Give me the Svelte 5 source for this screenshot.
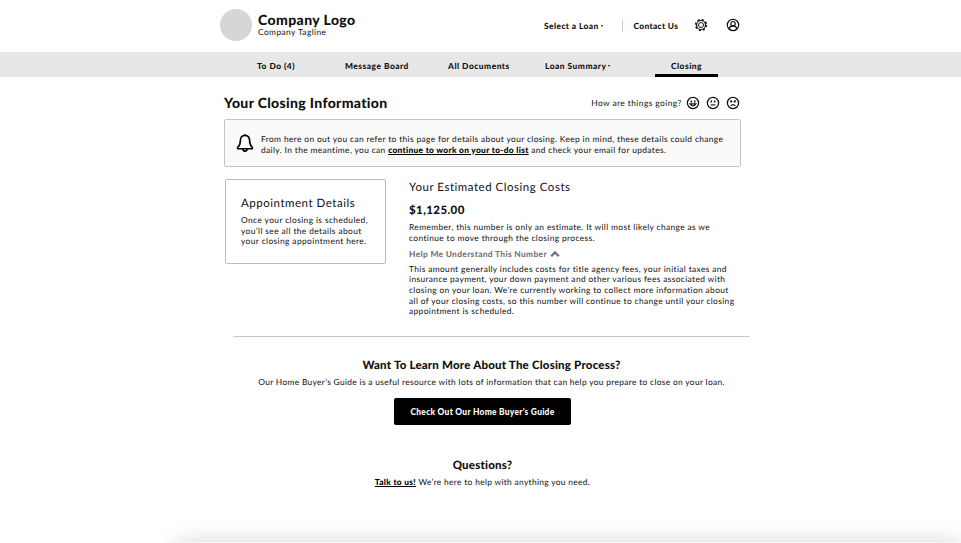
<script>
  const tabs = ['To Do (4)', 'Message Board', 'All Documents', 'Loan Summary', 'Closing'];
  const moods = [
    { name: 'Happy', mouth: 'M4.1 7.9Q7 12 9.9 7.9Z' },
    { name: 'Neutral', mouth: 'M4.7 8.9H9.3' },
    { name: 'Unhappy', mouth: 'M4.6 10Q7 7.2 9.4 10' }
  ];
  const costs = [
    'This amount generally includes costs for title agency fees, your initial taxes and',
    'insurance payment, your down payment and other various fees associated with',
    'closing on your loan. We’re currently working to collect more information about',
    'all of your closing costs, so this number will continue to change until your closing',
    'appointment is scheduled.'
  ];
</script>

<div class="page">
  <header>
    <div class="logo"></div>
    <div class="brand">
      <div class="name">Company Logo</div>
      <div class="tagline">Company Tagline</div>
    </div>
    <div class="select bold">Select a Loan<i class="caret"></i></div>
    <div class="rule"></div>
    <div class="contact bold">Contact Us</div>
    <svg class="gear" width="14" height="14" viewBox="0 0 14 14" fill="none" stroke="#111">
      <circle cx="7" cy="7" r="5.4" stroke-width="1.5" stroke-dasharray="2.12 2.12" />
      <circle cx="7" cy="7" r="4.5" stroke-width="1.2" />
      <circle cx="7" cy="7" r="2.5" stroke-width="1" />
    </svg>
    <svg class="user" width="14" height="14" viewBox="0 0 14 14" fill="none" stroke="#111" stroke-width="1.2">
      <circle cx="7" cy="7" r="5.7" />
      <circle cx="7" cy="5.7" r="2.2" />
      <path d="M3.2 11Q3.6 8.4 5.7 8.2H8.3Q10.4 8.4 10.8 11" />
    </svg>
  </header>

  <nav>
    {#each tabs as tab}
      <div class="tab bold" class:active={tab === 'Closing'}>
        {tab}{#if tab === 'Loan Summary'}<i class="caret"></i>{/if}
      </div>
    {/each}
  </nav>

  <main>
    <div class="titlebar">
      <h1>Your Closing Information</h1>
      <div class="feedback">
        <span class="ask">How are things going?</span>
        {#each moods as mood}
          <svg width="14" height="14" viewBox="0 0 14 14" fill="none" stroke="#111" stroke-width="1.1" aria-label={mood.name}>
            <circle cx="7" cy="7" r="5.6" stroke-width="1.3" />
            <path d="M5.3 4.4V6.4M8.7 4.4V6.4" stroke-width="1.5" />
            {#if mood.name === 'Unhappy'}<path d="M4.1 4.7L6.2 5.8M9.9 4.7L7.8 5.8" />{/if}
            <path d={mood.mouth} />
          </svg>
        {/each}
      </div>
    </div>

    <section class="notice">
      <svg width="18" height="20" viewBox="0 0 18 20" fill="none" stroke="#000" stroke-width="1.6" stroke-linejoin="round">
        <path d="M9 1V2.5M9 2.5C6 2.5 4.4 4.8 4.4 7.4C4.4 11.5 3.4 12.9 1.6 14.5V15.7H16.4V14.5C14.6 12.9 13.6 11.5 13.6 7.4C13.6 4.8 12 2.5 9 2.5Z" />
        <path d="M6.9 16C7 18.8 11 18.8 11.1 16" />
      </svg>
      <p>
        From here on out you can refer to this page for details about your closing. Keep in mind, these details could change<br />
        daily. In the meantime, you can <b>continue to work on your to-do list</b> and check your email for updates.
      </p>
    </section>

    <div class="columns">
      <section class="card">
        <h2>Appointment Details</h2>
        <p>Once your closing is scheduled,<br />you’ll see all the details about<br />your closing appointment here.</p>
      </section>
      <section class="costs">
        <h2>Your Estimated Closing Costs</h2>
        <div class="amount">$1,125.00</div>
        <p>Remember, this number is only an estimate. It will most likely change as we<br />continue to move through the closing process.</p>
        <div class="help">
          <span>Help Me Understand This Number</span>
          <svg width="10" height="8" viewBox="0 0 10 8" fill="none" stroke="#70707c" stroke-width="2.3"><path d="M1.2 6.2L5 2.4L8.8 6.2" /></svg>
        </div>
        <p>{#each costs as line}<span class="line">{line}</span>{/each}</p>
      </section>
    </div>
  </main>

  <hr />

  <section class="learn">
    <h3>Want To Learn More About The Closing Process?</h3>
    <p class="guide">Our Home Buyer’s Guide is a useful resource with lots of information that can help you prepare to close on your loan.</p>
  </section>
  <section class="contactus">
    <button>Check Out Our Home Buyer’s Guide</button>
    <h3 class="questions">Questions?</h3>
    <p class="talk"><b>Talk to us!</b> We’re here to help with anything you need.</p>
  </section>
  <div class="shadow"></div>
</div>

<style>
  :global(body) { margin: 0; background: #fff; }
  .page {
    position: relative;
    box-sizing: border-box;
    width: 961px;
    height: 543px;
    overflow: hidden;
    background: #fff;
    color: #111;
    font: 8.4px/10.6px Lato, sans-serif;
    letter-spacing: 0.37px;
    white-space: nowrap;
    text-rendering: geometricPrecision;
  }
  h1, h2, h3, p { margin: 0; }
  b { font-weight: 900; color: #000; letter-spacing: 0.3px; text-decoration: underline; text-underline-offset: 1px; }
  .bold { font-weight: 900; letter-spacing: 0.42px; }
  .caret {
    display: inline-block;
    margin-left: 2px;
    border: 1.5px solid transparent;
    border-top: 2px solid #111;
    border-bottom: 0;
    vertical-align: 2px;
  }
  header { display: flex; align-items: center; height: 52px; padding: 0 0 2px 220px; box-sizing: border-box; }
  .logo { width: 32px; height: 32px; margin-right: 6px; border-radius: 50%; background: #d6d6d6; }
  .brand { width: 286px; }
  .name { font-size: 14px; line-height: 14px; font-weight: 900; letter-spacing: 0.4px; }
  .tagline { line-height: 10.6px; letter-spacing: 0.42px; }
  .select { width: 78px; padding-top: 2px; }
  .rule { width: 1px; height: 12px; margin: 1px 10.5px 0 0; background: #ccc; }
  .contact { width: 60.5px; padding-top: 2px; letter-spacing: 0.34px; }
  .gear { margin-right: 18px; }
  nav {
    display: grid;
    grid-template-columns: 88px 103px 97px 110px 63px;
    height: 25px;
    padding-left: 257px;
    background: #e7e7e7;
    line-height: 28px;
  }
  .tab { box-sizing: border-box; height: 25px; letter-spacing: 0.5px; }
  .active { border-bottom: 3px solid #000; text-align: center; }
  main { width: 517px; margin-left: 224px; }
  .titlebar { display: flex; justify-content: space-between; align-items: center; height: 42px; }
  h1 { font-size: 14px; line-height: 18px; font-weight: 900; letter-spacing: 0.34px; margin-top: 10px; }
  .feedback { display: flex; align-items: center; gap: 6px; margin: 10px 1.3px 0 0; letter-spacing: 0.43px; }
  .ask { margin-right: -2px; }
  .notice {
    display: flex;
    align-items: center;
    box-sizing: border-box;
    height: 48px;
    padding-left: 11px;
    border: 1px solid #c4c4c4;
    border-radius: 2px;
    background: #fafafa;
  }
  .notice svg { margin-right: 7px; }
  .notice p { padding-top: 3px; }
  .columns { display: flex; align-items: flex-start; padding: 12px 0 0 1px; }
  .card {
    box-sizing: border-box;
    width: 161px;
    height: 85px;
    padding: 16px 0 0 15px;
    border: 1px solid #bcbcbc;
    border-radius: 2px;
  }
  h2 { font-size: 11.5px; line-height: 16px; font-weight: 400; letter-spacing: 0.52px; }
  .card p { margin-top: 3px; letter-spacing: 0.4px; }
  .costs { margin-left: 23px; padding-top: 1px; }
  .amount { margin: 7px 0 3px; font-size: 11.5px; line-height: 16px; font-weight: 900; letter-spacing: 0.4px; }
  .help { display: flex; align-items: center; gap: 3px; margin: 6px 0 4px; color: #777; font-weight: 900; letter-spacing: 0.33px; }
  .line { display: block; }
  hr { width: 517px; height: 1px; margin: 19px 0 0 233px; border: 0; background: #c8c8c8; }
  .learn, .contactus { display: flex; flex-direction: column; align-items: center; width: 517px; }
  .learn { margin-left: 233px; padding-top: 21px; }
  .contactus { margin-left: 224px; }
  h3 { font-size: 11.5px; line-height: 16px; font-weight: 900; letter-spacing: 0.2px; }
  .learn p, .contactus p { margin-top: 3px; letter-spacing: 0.33px; }
  button {
    width: 177px;
    height: 27px;
    margin-top: 11px;
    padding: 0;
    border: 0;
    border-radius: 2px;
    background: #000;
    color: #fff;
    font: 900 8.4px Lato, sans-serif;
    letter-spacing: 0.28px;
  }
  .questions { margin-top: 33px; }
  .shadow {
    position: absolute;
    left: 176px;
    top: 542px;
    width: 785px;
    height: 20px;
    background: #f6f6f6;
    box-shadow: 0 0 22px rgba(0, 0, 0, 0.17);
  }
</style>
